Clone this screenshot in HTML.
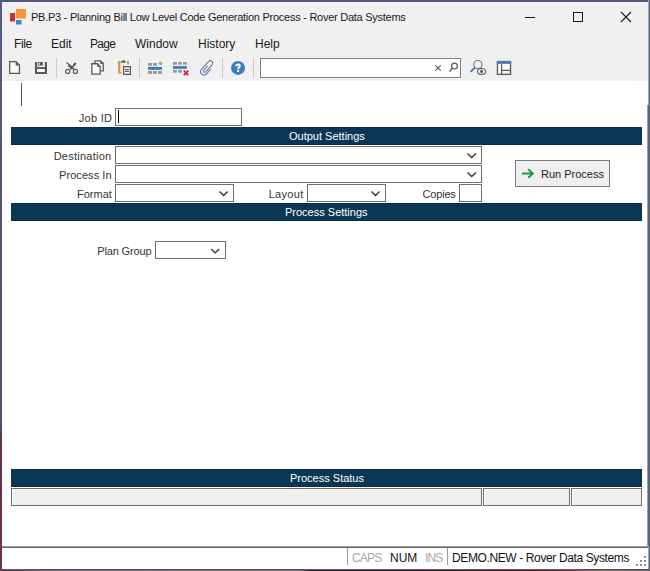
<!DOCTYPE html>
<html><head><meta charset="utf-8">
<style>
*{margin:0;padding:0;box-sizing:border-box}
html,body{width:650px;height:571px;overflow:hidden;background:#fff}
body{position:relative;font-family:"Liberation Sans",sans-serif;color:#000}
.a{position:absolute}
.t{position:absolute;white-space:nowrap;line-height:1}
.chrome{left:0;top:0;width:650px;height:81px;background:#f0f0f0}
.hdr{position:absolute;left:11px;width:631px;background:#0b3757;border-top:1px solid #0f2d47;border-bottom:1px solid #0e2a42}
.hdr span{position:absolute;color:#fff;font-size:11px;white-space:nowrap;line-height:1}
.box{position:absolute;border:1px solid #6e6e6e;background:#fff}
.lbl{position:absolute;font-size:11px;color:#333;white-space:nowrap;line-height:1}
.sep{position:absolute;width:1px;background:#c9c9c9}
.chev{position:absolute}
.cell{position:absolute;top:488px;height:18px;background:#f0f0f0;border:1px solid #6e6e6e;box-shadow:inset 1px 1px 0 #fff}
</style></head><body>

<!-- window chrome -->
<div class="a chrome"></div>
<div class="a" style="left:0;top:2px;width:650px;height:1px;background:#f4f6fe"></div>

<!-- title -->
<svg class="a" style="left:9px;top:9px" width="18" height="16" viewBox="0 0 18 16">
  <rect x="1" y="4" width="5" height="8.5" fill="#d0293f"/>
  <rect x="7" y="0" width="10" height="9.5" fill="#f39530"/>
  <rect x="7" y="11" width="5.5" height="4.5" fill="#3b82c8"/>
</svg>
<div id="title" class="t" style="left:31px;top:12px;font-size:11px;letter-spacing:-0.26px;color:#1a1a1a">PB.P3 - Planning Bill Low Level Code Generation Process - Rover Data Systems</div>

<!-- window buttons -->
<div class="a" style="left:525px;top:17px;width:10px;height:1px;background:#1a1a1a"></div>
<div class="a" style="left:573px;top:12px;width:10px;height:10px;border:1px solid #1a1a1a"></div>
<svg class="a" style="left:620px;top:11px" width="12" height="12" viewBox="0 0 12 12"><path d="M1 1L11 11M11 1L1 11" stroke="#1a1a1a" stroke-width="1.1"/></svg>

<!-- menu -->
<div id="m_file" class="t" style="left:14px;top:38px;font-size:12px;letter-spacing:-0.4px;color:#1a1a1a">File</div>
<div id="m_edit" class="t" style="left:51px;top:38px;font-size:12px;color:#1a1a1a">Edit</div>
<div id="m_page" class="t" style="left:90px;top:38px;font-size:12px;letter-spacing:-0.7px;color:#1a1a1a">Page</div>
<div id="m_win" class="t" style="left:135px;top:38px;font-size:12px;color:#1a1a1a">Window</div>
<div id="m_hist" class="t" style="left:198px;top:38px;font-size:12px;color:#1a1a1a">History</div>
<div id="m_help" class="t" style="left:255px;top:38px;font-size:12px;color:#1a1a1a">Help</div>

<!-- toolbar -->
<!-- search box -->
<div class="box" style="left:260px;top:58px;width:201px;height:20px;border-color:#828282"></div>


<div class="sep" style="left:56px;top:58px;height:20px"></div>
<div class="sep" style="left:139px;top:58px;height:20px"></div>
<div class="sep" style="left:222px;top:58px;height:20px"></div>
<div class="sep" style="left:253px;top:58px;height:20px"></div>


<svg class="a" style="left:0;top:0" width="650" height="81" viewBox="0 0 650 81">
 <g fill="none" stroke="#5a5a5a" stroke-width="1.3">
  <!-- new -->
  <path d="M9.65 61.65H16L19.45 65.1V73.35H9.65Z" fill="#fafafa"/>
  <path d="M15.6 61.2V65.4H19.8Z" fill="#5a5a5a" stroke="none"/>
 </g>
 <!-- save -->
 <rect x="35" y="62" width="12" height="12" fill="#585858"/>
 <rect x="37.1" y="62" width="7.8" height="5.1" fill="#f0f0f0"/>
 <rect x="37.9" y="62" width="5" height="3.6" fill="#585858"/>
 <rect x="38.7" y="62.9" width="1.4" height="1.9" fill="#f0f0f0"/>
 <rect x="37.1" y="69" width="7.7" height="3" fill="#fafafa"/>
 <!-- scissors -->
 <g stroke="#5a5a5a" fill="none">
  <path d="M66.6 62.4L74.6 69.6" stroke-width="1.3"/>
  <path d="M68.6 65.2L72.8 68.8" stroke-width="2.3"/>
  <path d="M75.9 62.8L70.2 69.6" stroke-width="1.3"/>
  <path d="M75.5 63.2L73.4 65.9" stroke-width="2.1"/>
  <circle cx="67.6" cy="71.4" r="2.05" stroke-width="1.15"/>
  <circle cx="75.4" cy="71.4" r="2.05" stroke-width="1.15"/>
 </g>
 <!-- copy -->
 <g stroke="#5a5a5a" stroke-width="1.3">
  <path d="M94.95 60.85H100.6L103.25 63.5V70.95H94.95Z" fill="#fafafa"/>
  <path d="M100.3 60.4V63.9H103.8Z" fill="#5a5a5a" stroke="none"/>
  <path d="M91.85 63.75H97.5L100.15 66.4V74.15H91.85Z" fill="#fafafa"/>
  <path d="M97.2 63.3V66.8H100.6Z" fill="#5a5a5a" stroke="none"/>
 </g>
 <!-- paste -->
 <path d="M118.2 61.2H120.3V72.3H121.8V73.6H118.2Z" fill="#e8912c"/>
 <rect x="118.2" y="61.2" width="2.1" height="2.6" fill="#b9a055"/>
 <rect x="127" y="60.8" width="2" height="3.6" fill="#b8a068"/>
 <path d="M121.2 62.8V61.8Q121.5 60.3 123.4 60.3Q125.3 60.3 125.7 61.8V62.8Z" fill="#5a5a5a"/>
 <rect x="123.65" y="66.65" width="6.7" height="7.7" fill="#fafafa" stroke="#5a5a5a" stroke-width="1.3"/>
 <path d="M125 69.6H129M125 71.5H129" stroke="#5a5a5a" stroke-width="1.1"/>
 <!-- insert row -->
 <g fill="#9a9a9a">
  <rect x="148" y="63" width="4" height="2.8"/><rect x="153" y="63" width="4" height="2.8"/>
  <rect x="148" y="71" width="4" height="2.9"/><rect x="153" y="71" width="4" height="2.9"/><rect x="158" y="71" width="4" height="2.9"/>
 </g>
 <circle cx="160.6" cy="63.2" r="1.8" fill="#d99a48"/>
 <rect x="148" y="66.9" width="14" height="2.9" fill="#4277bb"/>
 <!-- delete row -->
 <g fill="#9a9a9a">
  <rect x="173" y="62" width="3.9" height="2.7"/><rect x="178.1" y="62" width="3.8" height="2.7"/><rect x="183" y="62" width="3.9" height="2.7"/>
  <rect x="173" y="69.8" width="3.9" height="2.9"/><rect x="178.1" y="69.8" width="3.8" height="2.9"/>
 </g>
 <rect x="173" y="66.1" width="13.9" height="2.7" fill="#4277bb"/>
 <path d="M183.8 70.6L188.3 75.1M188.3 70.6L183.8 75.1" stroke="#c8203c" stroke-width="1.7"/>
 <!-- paperclip -->
 <g transform="translate(206.4 68.1) rotate(42)" fill="none" stroke="#5d7aa6" stroke-width="1.1">
  <path d="M-0.6 -2.5V3.2A1.3 1.3 0 0 0 2 3.2V-6.2A2.4 2.4 0 0 0 -2.8 -6.2V4.2A3.4 3.4 0 0 0 4 4.2V-2.2"/>
 </g>
 <!-- help -->
 <circle cx="238" cy="67.9" r="7" fill="#3d7cc0"/>
 <path d="M236.3 66.2Q236.3 64.5 238.1 64.5Q239.8 64.5 239.8 66Q239.8 66.9 238.9 67.5Q238.1 68 238.1 69.3" fill="none" stroke="#fff" stroke-width="1.9"/>
 <rect x="237.1" y="70.1" width="2" height="1.9" fill="#fff"/>
 <!-- search x + magnifier -->
 <path d="M435.3 65.3L440.7 70.7M440.7 65.3L435.3 70.7" stroke="#5a5a5a" stroke-width="1.2"/>
 <circle cx="454.5" cy="66.1" r="2.9" fill="none" stroke="#5a5a5a" stroke-width="1.2"/>
 <path d="M452.4 68.3L449.4 71.5" stroke="#5a5a5a" stroke-width="1.3"/>
 <!-- find + eye -->
 <circle cx="477.9" cy="64.6" r="4.1" fill="none" stroke="#5f7fa6" stroke-width="1.15"/>
 <path d="M474.8 67.6L470.6 71.9" stroke="#4f71a0" stroke-width="1.8"/>
 <ellipse cx="481.6" cy="71.4" rx="4.1" ry="2.95" fill="#f0f0f0" stroke="#606060" stroke-width="1.15"/>
 <circle cx="481.6" cy="71.4" r="1.55" fill="#5a5a5a"/>
 <!-- layout -->
 <rect x="497.45" y="61.55" width="13.1" height="12.8" fill="#fafafa" stroke="#5a5a5a" stroke-width="1.3"/>
 <rect x="496.8" y="60.9" width="14.4" height="3" fill="#4a7ab0"/>
 <path d="M501.6 63.9V74.3M501.6 70.4H510" stroke="#5a5a5a" stroke-width="1.2"/>
</svg>

<!-- content -->
<div class="a" style="left:21px;top:83px;width:1px;height:23px;background:#5a5a5a"></div>

<div id="l_job" class="lbl" style="right:537.7px;top:113px;letter-spacing:0.28px">Job ID</div>
<div class="box" style="left:115px;top:108px;width:127px;height:18px"></div>
<div class="a" style="left:118px;top:110px;width:1px;height:13px;background:#000"></div>

<div class="hdr" style="top:127px;height:18px"><span id="h1" style="left:278px;top:3px">Output Settings</span></div>

<div id="l_dest" class="lbl" style="right:538.64px;top:151px;letter-spacing:0.24px">Destination</div>
<div class="box" style="left:115px;top:146px;width:367px;height:18px"></div>
<div id="l_proc" class="lbl" style="right:538.45px;top:170px;letter-spacing:0.05px">Process In</div>
<div class="box" style="left:115px;top:165px;width:367px;height:18px"></div>
<div id="l_fmt" class="lbl" style="right:538.2px;top:189px;letter-spacing:0.0px">Format</div>
<div class="box" style="left:115px;top:184px;width:119px;height:18px"></div>
<div id="l_lay" class="lbl" style="right:346.5px;top:189px;letter-spacing:0.3px">Layout</div>
<div class="box" style="left:307px;top:184px;width:79px;height:18px"></div>
<div id="l_cop" class="lbl" style="right:194.4px;top:189px;letter-spacing:-0.2px">Copies</div>
<div class="box" style="left:459px;top:184px;width:23px;height:18px"></div>

<!-- run process button -->
<div class="a" style="left:515px;top:160px;width:95px;height:27px;background:#efefef;border:1px solid #7a7a7a"></div>
<div id="b_run" class="t" style="left:541px;top:169px;font-size:11px;color:#222">Run Process</div>


<svg class="a" style="left:0;top:140px;z-index:5" width="650" height="130" viewBox="0 140 650 130">
 <g fill="none" stroke="#333" stroke-width="1.4">
  <path d="M467.5 153.6L471.7 157.6L475.9 153.6"/>
  <path d="M467.5 172.6L471.7 176.6L475.9 172.6"/>
  <path d="M219.6 191.6L223.6 195.5L227.6 191.6"/>
  <path d="M371.5 191.6L375.5 195.5L379.5 191.6"/>
  <path d="M211.2 249.1L215.2 252.9L219.2 249.1"/>
 </g>
 <path d="M522 173.5H532.5M528.3 169.2L532.8 173.5L528.3 177.8" fill="none" stroke="#1f9a3c" stroke-width="2"/>
</svg>
<div class="hdr" style="top:203px;height:18px"><span id="h2" style="left:274px;top:3px">Process Settings</span></div>

<div id="l_plan" class="lbl" style="right:498.65px;top:246px;letter-spacing:-0.15px">Plan Group</div>
<div class="box" style="left:155px;top:241px;width:71px;height:18px"></div>

<div class="hdr" style="top:469px;height:18px"><span id="h3" style="left:279px;top:3px">Process Status</span></div>
<div class="cell" style="left:11px;width:471px"></div>
<div class="cell" style="left:483px;width:87px"></div>
<div class="cell" style="left:571px;width:71px"></div>

<!-- status bar -->
<div class="a" style="left:0;top:546px;width:650px;height:1px;background:#a0a0a0"></div>
<div class="a" style="left:0;top:547px;width:650px;height:1px;background:#626262"></div>
<div class="a" style="left:0;top:548px;width:650px;height:21px;background:#fff"></div>
<div class="a" style="left:347px;top:548px;width:1px;height:17px;background:#9a9a9a"></div>
<div class="a" style="left:447px;top:548px;width:1px;height:17px;background:#9a9a9a"></div>
<div id="s_caps" class="t" style="left:352px;top:552px;font-size:12px;letter-spacing:-0.8px;color:#a8a8a8">CAPS</div>
<div id="s_num" class="t" style="left:390px;top:552px;font-size:12px;color:#111">NUM</div>
<div id="s_ins" class="t" style="left:425px;top:552px;font-size:12px;letter-spacing:-0.9px;color:#a8a8a8">INS</div>
<div id="s_demo" class="t" style="left:452px;top:552px;font-size:12px;letter-spacing:-0.38px;color:#111">DEMO.NEW - Rover Data Systems</div>


<svg class="a" style="left:630px;top:550px" width="18" height="19" viewBox="630 550 18 19">
 <g fill="#8c8c8c"><rect x="644" y="556" width="2" height="2"/><rect x="640" y="560" width="2" height="2"/><rect x="644" y="560" width="2" height="2"/><rect x="636" y="564" width="2" height="2"/><rect x="640" y="564" width="2" height="2"/><rect x="644" y="564" width="2" height="2"/></g>
</svg>

<!-- window borders -->
<div class="a" style="left:0;top:0;width:650px;height:2px;background:#52567a"></div>
<div class="a" style="left:0;top:0;width:2px;height:571px;background:linear-gradient(#5a5a88 0,#585a84 60px,#545678 150px,#4f5274 290px,#4f5274 420px,#64304a 442px,#6a3550 100%)"></div>
<div class="a" style="left:648px;top:0;width:2px;height:571px;background:linear-gradient(90deg,#9aa4b8 50%,#566680 50%)"></div>
<div class="a" style="left:647px;top:105px;width:2px;height:441px;background:linear-gradient(90deg,#97a0b2 50%,#566680 50%)"></div>
<div class="a" style="left:0;top:569px;width:650px;height:1px;background:#56586e"></div>
<div class="a" style="left:0;top:570px;width:650px;height:1px;background:linear-gradient(90deg,#6a3550 0,#7a5a78 10%,#806068 32%,#7a6070 46%,#302038 48%,#2a2030 62%,#6a1a1a 82%,#8a6060 93%,#6a5060 100%)"></div>

</body></html>
